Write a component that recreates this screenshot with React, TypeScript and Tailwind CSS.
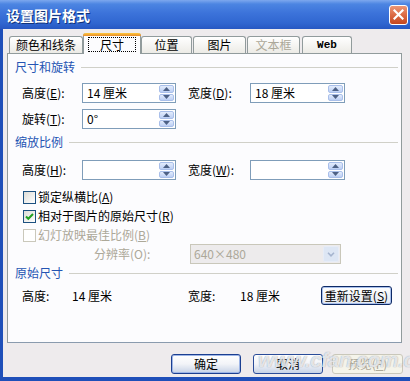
import React from "react";

function Spin() {
  return (
    <div className="ml-auto w-[15px] h-[16px] flex flex-col gap-[1px]">
      <div className="flex-1 rounded-[2px] border border-[#A9BFEA] bg-gradient-to-b from-[#E3ECFC] to-[#BCCFF4] flex items-center justify-center">
        <svg width="7" height="4" viewBox="0 0 7 4"><path d="M3.5 0 L7 4 L0 4Z" fill="#4D6185" /></svg>
      </div>
      <div className="flex-1 rounded-[2px] border border-[#A9BFEA] bg-gradient-to-b from-[#E3ECFC] to-[#BCCFF4] flex items-center justify-center">
        <svg width="7" height="4" viewBox="0 0 7 4"><path d="M0 0 L7 0 L3.5 4Z" fill="#4D6185" /></svg>
      </div>
    </div>
  );
}

function Field({ value, w, h = "h-[20px]" }: { value?: string; w: string; h?: string }) {
  return (
    <div className={`${w} ${h} flex items-center border border-[#7F9DB9] bg-white pl-[4px] pr-[1px]`}>
      <span className="text-[12px] leading-[14px]">{value}</span>
      <Spin />
    </div>
  );
}

function Header({ text }: { text: string }) {
  return (
    <div className="flex items-center h-[14px] pl-[7px] pr-[3px]">
      <span className="text-[12px] leading-[14px] text-[#2454B3]">{text}</span>
      <div className="flex-1 ml-[6px] h-px bg-[#D0D0C8]" />
    </div>
  );
}

function Lbl({ children, w }: { children: React.ReactNode; w: string }) {
  return <span className={`${w} text-[12px] leading-[14px] whitespace-nowrap`}>{children}</span>;
}

function CheckBox({ checked, disabled }: { checked?: boolean; disabled?: boolean }) {
  return (
    <div
      className={`w-[13px] h-[13px] border flex items-center justify-center ${
        disabled ? "border-[#CAC8BB] bg-white" : "border-[#1C5180] bg-gradient-to-br from-[#DCDCD7] to-white"
      }`}
    >
      {checked && (
        <svg width="11" height="11" viewBox="0 0 11 11">
          <path d="M2 5.5 L4.3 7.8 L9 3" stroke="#21A121" strokeWidth="2" fill="none" />
        </svg>
      )}
    </div>
  );
}

function Tab({ label, w, selected, disabled, ml, web }: { label: string; w: string; selected?: boolean; disabled?: boolean; ml?: string; web?: boolean }) {
  if (selected) {
    return (
      <div className={`${w} ${ml ?? ""} h-[21px] -mb-px relative z-10 bg-[#FCFCFE] border-x border-[#919B9C] rounded-t-[3px] flex flex-col`}>
        <div className="h-[3px] rounded-t-[3px] bg-gradient-to-b from-[#FFC83C] to-[#E68B2C] -mx-px" />
        <div className="mx-[4px] mt-[1px] h-[15px] border border-dotted border-black flex items-center justify-center text-[12px] leading-[14px]">
          {label}
        </div>
      </div>
    );
  }
  return (
    <div
      className={`${w} ${ml ?? ""} h-[17px] border border-b-0 border-[#919B9C] rounded-t-[3px] bg-gradient-to-b from-white to-[#ECEBE6] flex items-center justify-center ${
        web ? "font-['Liberation_Mono',monospace] text-[11px] font-bold" : "text-[12px]"
      } leading-[14px] ${disabled ? "text-[#ACA899]" : "text-black"}`}
    >
      {label}
    </div>
  );
}

function Btn({ children, w, ml, disabled, strong }: { children: React.ReactNode; w: string; ml?: string; disabled?: boolean; strong?: boolean }) {
  return (
    <div
      className={`${w} ${ml ?? ""} h-[20px] rounded-[3px] border flex items-center justify-center text-[12px] leading-[14px] ${
        disabled
          ? "border-[#C9C7BA] bg-[#F5F4EA] text-[#ACA899]"
          : strong
          ? "border-[#1B3F91] bg-gradient-to-b from-white via-[#F2F4F8] to-[#C6D2E6] text-black shadow-[inset_0_0_0_1px_#9DB5E6]"
          : "border-[#2A4C99] bg-gradient-to-b from-white via-[#F2F4F8] to-[#C6D2E6] text-black"
      }`}
    >
      {children}
    </div>
  );
}

export default function App() {
  return (
    <div className="w-[410px] h-[381px] overflow-hidden flex flex-col bg-[#1F4FB9] font-['Noto_Sans_CJK_SC','Liberation_Sans',sans-serif] text-black relative">
      {/* title bar */}
      <div className="h-[29px] shrink-0 flex items-center bg-[linear-gradient(to_bottom,#7DA8EE_0%,#4C85E2_14%,#3C73DA_45%,#3066D0_80%,#2657C2_100%)]">
        <span className="ml-[6px] text-white font-bold text-[14px] leading-[16px] [text-shadow:1px_1px_0_#10337A]">
          设置图片格式
        </span>
        <div className="ml-auto mr-[2px] w-[19px] h-[20px] rounded-[3px] border border-white bg-gradient-to-b from-[#EC9676] via-[#DB6A44] to-[#C4461E] flex items-center justify-center">
          <svg width="11" height="11" viewBox="0 0 11 11">
            <path d="M1.5 1.5 L9.5 9.5 M9.5 1.5 L1.5 9.5" stroke="white" strokeWidth="2.2" strokeLinecap="square" />
          </svg>
        </div>
      </div>

      {/* body */}
      <div className="flex-1 ml-[3px] bg-[#EEEBED] flex flex-col pt-[4px]">
        {/* tab row */}
        <div className="h-[20px] flex items-end ml-[6px]">
          <Tab label="颜色和线条" w="w-[74px]" />
          <Tab label="尺寸" w="w-[58px]" selected />
          <Tab label="位置" w="w-[51px]" />
          <Tab label="图片" w="w-[53px]" ml="ml-[1px]" />
          <Tab label="文本框" w="w-[53px]" ml="ml-[1px]" disabled />
          <Tab label="Web" w="w-[50px]" ml="ml-[2px]" web />
        </div>

        {/* panel */}
        <div className="ml-[4px] w-[395px] h-[290px] border border-[#919B9C] border-b-[#8A9BAE] bg-[#FCFCFE] flex flex-col">
          <div className="mt-[6px]">
            <Header text="尺寸和旋转" />
          </div>
          <div className="mt-[9px] flex items-center pl-[14px]">
            <Lbl w="w-[60px]">高度(<u>E</u>):</Lbl>
            <Field value="14 厘米" w="w-[94px]" />
            <span className="w-[12px]" />
            <Lbl w="w-[62px]">宽度(<u>D</u>):</Lbl>
            <Field value="18 厘米" w="w-[95px]" />
          </div>
          <div className="mt-[6px] flex items-center pl-[14px]">
            <Lbl w="w-[60px]">旋转(<u>T</u>):</Lbl>
            <Field value="0°" w="w-[94px]" />
          </div>

          <div className="mt-[6px]">
            <Header text="缩放比例" />
          </div>
          <div className="mt-[11px] flex items-center pl-[14px]">
            <Lbl w="w-[60px]">高度(<u>H</u>):</Lbl>
            <Field w="w-[94px]" />
            <span className="w-[12px]" />
            <Lbl w="w-[62px]">宽度(<u>W</u>):</Lbl>
            <Field w="w-[95px]" />
          </div>

          <div className="mt-[10px] h-[14px] flex items-center pl-[15px] gap-[2px]">
            <CheckBox />
            <span className="text-[12px] leading-[14px]">锁定纵横比(<u>A</u>)</span>
          </div>
          <div className="mt-[5px] h-[14px] flex items-center pl-[15px] gap-[2px]">
            <CheckBox checked />
            <span className="text-[12px] leading-[14px]">相对于图片的原始尺寸(<u>R</u>)</span>
          </div>
          <div className="mt-[5px] h-[14px] flex items-center pl-[15px] gap-[2px]">
            <CheckBox disabled />
            <span className="text-[12px] leading-[14px] text-[#ACA899]">幻灯放映最佳比例(<u>B</u>)</span>
          </div>

          <div className="mt-[2px] flex items-center pl-[86px]">
            <span className="w-[96px] text-[12px] leading-[14px] text-[#ACA899]">分辨率(O):</span>
            <div className="w-[151px] h-[20px] border border-[#C9C7BA] bg-[#EDEBEC] flex items-center pl-[3px] pr-[1px]">
              <span className="text-[12px] leading-[14px] text-[#ACA899]">640×480</span>
              <div className="ml-auto w-[16px] h-[16px] rounded-[2px] bg-[#DDE6F4] border border-[#E6ECF7] flex items-center justify-center">
                <svg width="8" height="5" viewBox="0 0 8 5">
                  <path d="M1 0.8 L4 3.8 L7 0.8" stroke="#A6B5CF" strokeWidth="1.6" fill="none" />
                </svg>
              </div>
            </div>
          </div>

          <div className="mt-[2px]">
            <Header text="原始尺寸" />
          </div>
          <div className="mt-[6px] flex items-center pl-[14px]">
            <Lbl w="w-[50px]">高度:</Lbl>
            <Lbl w="w-[116px]">14 厘米</Lbl>
            <Lbl w="w-[52px]">宽度:</Lbl>
            <Lbl w="w-[81px]">18 厘米</Lbl>
            <div className="w-[71px] h-[19px] rounded-[3px] border border-[#0E2A66] bg-gradient-to-b from-white to-[#E4E8F0] shadow-[inset_0_0_0_1px_#A9C0EC] flex items-center justify-center text-[12px] leading-[14px]">
              重新设置(<u>S</u>)
            </div>
          </div>
        </div>

        {/* bottom buttons */}
        <div className="mt-[11px] flex">
          <Btn w="w-[70px]" ml="ml-[168px]" strong>确定</Btn>
          <Btn w="w-[70px]" ml="ml-[12px]">取消</Btn>
          <Btn w="w-[71px]" ml="ml-[9px]" disabled>预览(<u>P</u>)</Btn>
        </div>
      </div>
      <div className="h-[4px] shrink-0" />

      {/* watermark */}
      <div className="absolute left-[258px] top-[347px] font-['Liberation_Sans',sans-serif] italic font-bold text-[21px] leading-[26px] tracking-[-0.5px] text-[rgba(255,255,255,0.75)] [text-shadow:0_0_1px_rgba(90,100,120,0.7)] pointer-events-none whitespace-nowrap">
        www.cfan.com.cn
      </div>
    </div>
  );
}
